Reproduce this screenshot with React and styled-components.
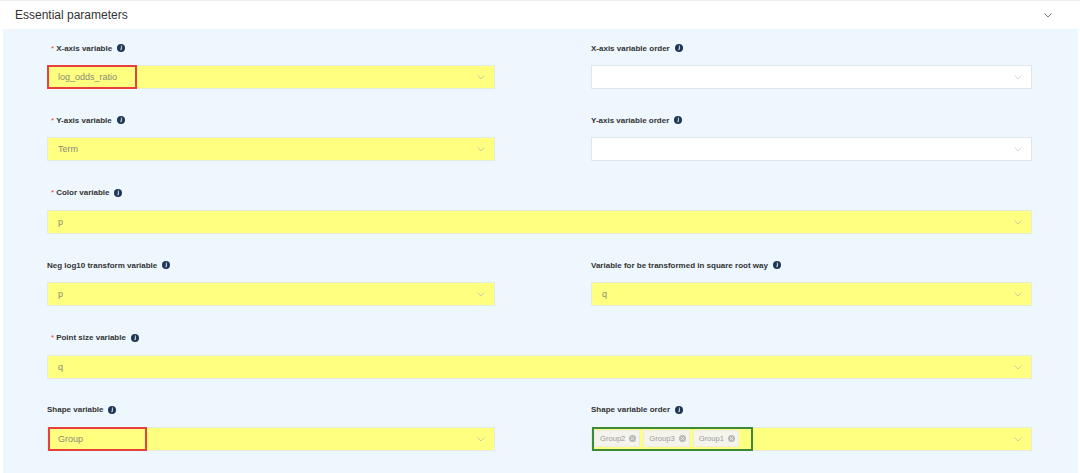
import React from 'react'
import styled, { createGlobalStyle } from 'styled-components'

const GlobalStyle = createGlobalStyle`
  body {
    margin: 0;
    background: #ffffff;
    font-family: "Liberation Sans", Arial, sans-serif;
  }
`

const fields = [
  { label: 'X-axis variable', required: true, value: 'log_odds_ratio', mark: 'red', markWidth: 90 },
  { label: 'X-axis variable order', empty: true },
  { label: 'Y-axis variable', required: true, value: 'Term' },
  { label: 'Y-axis variable order', empty: true },
  { label: 'Color variable', required: true, value: 'p', wide: true },
  { label: 'Neg log10 transform variable', value: 'p' },
  { label: 'Variable for be transformed in square root way', value: 'q' },
  { label: 'Point size variable', required: true, value: 'q', wide: true },
  { label: 'Shape variable', value: 'Group', mark: 'red', markWidth: 99, markLeft: 0 },
  { label: 'Shape variable order', tags: ['Group2', 'Group3', 'Group1'] },
]

const Page = styled.div`
  width: 1080px;
  height: 473px;
  overflow: hidden;
  border-top: 1px solid #eceef2;
  box-sizing: border-box;
`

const Header = styled.div`
  height: 28px;
  display: flex;
  align-items: center;
  justify-content: space-between;
  padding: 0 28px 0 15px;
  font-size: 12px;
  color: #333;
`

const Panel = styled.div`
  margin: 0 2px 0 3px;
  height: 444px;
  background: #eef6fe;
  padding: 13px 0 0 44px;
  box-sizing: border-box;
`

const Grid = styled.div`
  display: grid;
  grid-template-columns: 448px 441px;
  column-gap: 96px;
  row-gap: 25.4px;
`

const Field = styled.div`
  grid-column: ${p => (p.$wide ? '1 / span 2' : 'auto')};
  display: flex;
  flex-direction: column;
  gap: 11px;
`

const Label = styled.div`
  height: 12px;
  display: flex;
  align-items: center;
  gap: 5px;
  font-size: 8px;
  font-weight: bold;
  color: #333;
  padding-left: ${p => (p.$required ? '4px' : '0')};
`

const Star = styled.span`
  color: #f0443a;
  font-weight: normal;
  margin-right: -3px;
`

const Select = styled.div`
  position: relative;
  height: 24px;
  box-sizing: border-box;
  display: flex;
  align-items: center;
  gap: 3px;
  padding: 0 ${p => (p.$tags ? '2px' : '10px')};
  background: ${p => (p.$empty ? '#ffffff' : '#ffff80')};
  border: 1px solid ${p => (p.$empty ? '#e2e6ea' : '#e6ecdc')};
  font-size: 9px;
  color: #8a8a7a;
`

const Mark = styled.div`
  position: absolute;
  top: -1px;
  left: ${p => (p.$left === undefined ? -1 : p.$left)}px;
  width: ${p => p.$width}px;
  height: 24px;
  box-sizing: border-box;
  border: 2px solid ${p => (p.$color === 'green' ? '#3b8a3b' : '#e8403c')};
`

const Chevron = styled.svg`
  position: absolute;
  right: ${p => p.$right || 9}px;
  top: 50%;
  margin-top: -2px;
`

const Tag = styled.span`
  height: 15px;
  display: inline-flex;
  align-items: center;
  gap: 4px;
  padding: 0 3px 0 5px;
  background: #f4f4ec;
  border: 1px solid #ecece4;
  font-size: 7.6px;
  color: #9a9a9a;
`

const InfoIcon = () => (
  <svg width="8" height="8" viewBox="0 0 8 8">
    <circle cx="4" cy="4" r="4" fill="#1e3657" />
    <circle cx="4.4" cy="2.1" r="0.7" fill="#fff" />
    <path d="M3.9 3.4 L4.5 3.4 L3.9 6.2" stroke="#fff" strokeWidth="1" fill="none" />
  </svg>
)

const CloseDot = () => (
  <svg width="7" height="7" viewBox="0 0 7 7">
    <circle cx="3.5" cy="3.5" r="3.5" fill="#b9b9b9" />
    <path d="M2.1 2.1 L4.9 4.9 M4.9 2.1 L2.1 4.9" stroke="#eee" strokeWidth="0.9" />
  </svg>
)

const Arrow = ({ color = '#c4c4b4', right }) => (
  <Chevron $right={right} width="8" height="5" viewBox="0 0 8 5">
    <path d="M0.5 0.5 L4 4 L7.5 0.5" stroke={color} strokeWidth="0.9" fill="none" />
  </Chevron>
)

const App = () => (
  <Page>
    <GlobalStyle />
    <Header>
      <span>Essential parameters</span>
      <svg width="8" height="5" viewBox="0 0 8 5">
        <path d="M0.5 0.5 L4 4 L7.5 0.5" stroke="#777" strokeWidth="1" fill="none" />
      </svg>
    </Header>
    <Panel>
      <Grid>
        {fields.map(f => (
          <Field key={f.label} $wide={f.wide}>
            <Label $required={f.required}>
              {f.required && <Star>*</Star>}
              <span>{f.label}</span>
              <InfoIcon />
            </Label>
            <Select $empty={f.empty} $tags={!!f.tags}>
              {f.value}
              {f.tags && f.tags.map(t => (
                <Tag key={t}>
                  {t}
                  <CloseDot />
                </Tag>
              ))}
              {f.mark && <Mark $color={f.mark} $width={f.markWidth} $left={f.markLeft} />}
              {f.tags && <Mark $color="green" $width={161} $left={0} />}
              <Arrow color={f.empty ? '#cfd3d8' : '#c4c4b4'} />
            </Select>
          </Field>
        ))}
      </Grid>
    </Panel>
  </Page>
)

export default App
